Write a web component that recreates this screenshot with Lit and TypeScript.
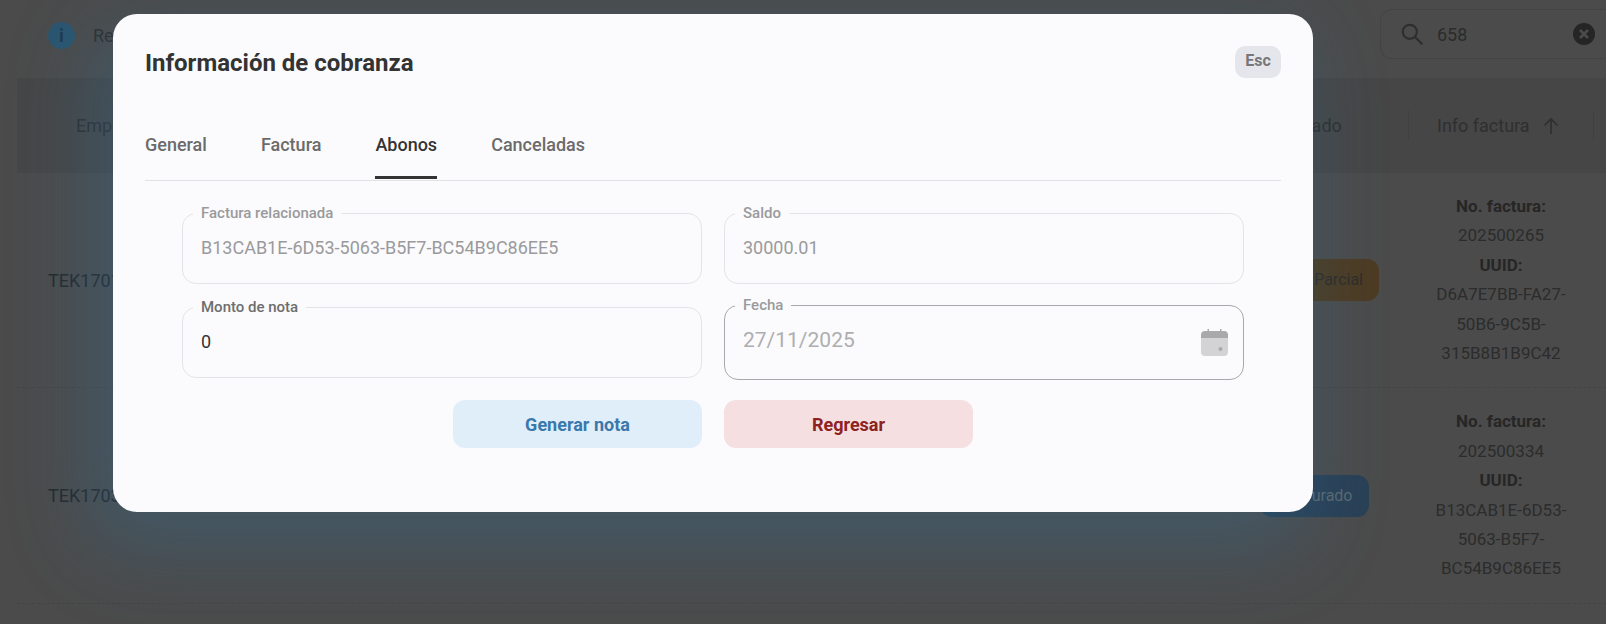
import {html, css, LitElement} from 'lit';
import {customElement} from 'lit/decorators.js';

const rows = [
    {id: 'TEK17012', status: 'Parcial', cls: 'parcial', folio: '202500265', uuid: ['D6A7E7BB-FA27-', '50B6-9C5B-', '315B8B1B9C42']},
    {id: 'TEK17034', status: 'Curado', cls: 'curado', folio: '202500334', uuid: ['B13CAB1E-6D53-', '5063-B5F7-', 'BC54B9C86EE5']},
];

const calendarIcon = html`
    <svg class="calendar" viewBox="0 0 27 27" width="27" height="27">
        <path fill="#d3d3d5" d="M0 8h27v15a4 4 0 0 1-4 4H4a4 4 0 0 1-4-4z" />
        <path fill="#a9a9ab" d="M0 9V6a4 4 0 0 1 4-4h2.500V0h1.500v2h11V0h1.500v2H23a4 4 0 0 1 4 4v3z" />
        <circle fill="#a9a9ab" cx="19.500" cy="20" r="2" />
    </svg>
`;

@customElement('app-root')
export class AppRoot extends LitElement {
    render() {
        return html`
            <div class="topbar">
                <div class="notice">
                    <span class="info-dot">i</span>
                    <span>Registros</span>
                </div>
                <div class="search">
                    <svg viewBox="0 0 24 24" width="26" height="26" fill="none" stroke="#2e2e2e" stroke-width="2">
                        <circle cx="10" cy="10" r="6.500" />
                        <path d="M15 15l6.500 6.500" />
                    </svg>
                    <span class="search-value">658</span>
                    <svg class="clear" viewBox="0 0 22 22" width="22" height="22">
                        <circle cx="11" cy="11" r="11" fill="#252525" />
                        <path d="M7 7l8 8M15 7l-8 8" stroke="#4b4b4b" stroke-width="2.600" />
                    </svg>
                </div>
            </div>

            <div class="table">
                <div class="thead">
                    <div class="th first">Empresa</div>
                    <div class="th center">Estado</div>
                    <div class="th info-head">
                        Info factura
                        <svg viewBox="0 0 18 18" width="18" height="18" fill="none" stroke="#2f2f2f" stroke-width="1.600">
                            <path d="M9 17V2M2.500 8.500L9 2l6.500 6.500" />
                        </svg>
                    </div>
                </div>
                ${rows.map(r => html`
                    <div class="row">
                        <div class="cell-id">${r.id}</div>
                        <div class="cell-status"><span class="badge ${r.cls}">${r.status}</span></div>
                        <div class="cell-info">
                            <b>No. factura:</b>
                            <div>${r.folio}</div>
                            <b>UUID:</b>
                            ${r.uuid.map(u => html`<div>${u}</div>`)}
                        </div>
                    </div>
                `)}
            </div>

            <div class="modal">
                <div class="modal-head">
                    <h2>Información de cobranza</h2>
                    <span class="esc">Esc</span>
                </div>
                <div class="tabs">
                    <span class="tab">General</span>
                    <span class="tab">Factura</span>
                    <span class="tab active">Abonos</span>
                    <span class="tab">Canceladas</span>
                </div>
                <div class="form">
                    <div class="form-row">
                        <fieldset class="disabled">
                            <legend>Factura relacionada</legend>
                            <div class="value">B13CAB1E-6D53-5063-B5F7-BC54B9C86EE5</div>
                        </fieldset>
                        <fieldset class="disabled">
                            <legend>Saldo</legend>
                            <div class="value">30000.01</div>
                        </fieldset>
                    </div>
                    <div class="form-row">
                        <fieldset>
                            <legend>Monto de nota</legend>
                            <div class="value">0</div>
                        </fieldset>
                        <fieldset class="date">
                            <legend>Fecha</legend>
                            <div class="value date-value">
                                <span>27/11/2025</span>
                                ${calendarIcon}
                            </div>
                        </fieldset>
                    </div>
                    <div class="actions">
                        <button class="generate">Generar nota</button>
                        <button class="back">Regresar</button>
                    </div>
                </div>
            </div>
        `;
    }

    static styles = [
        css`
            :host {
                display: block;
                position: relative;
                height: 624px;
                overflow: hidden;
                background: #4b4b4b;
                font-family: Roboto, sans-serif;
                color: #2b2b2b;
            }

            .topbar {
                height: 78px;
                box-sizing: border-box;
                padding: 9px 0 0 48px;
                display: flex;
                justify-content: space-between;
                align-items: flex-start;
            }

            .notice {
                display: flex;
                align-items: center;
                gap: 18px;
                height: 52px;
                font-size: 18px;
                color: #2f2f2f;
            }

            .info-dot {
                width: 27px;
                height: 27px;
                border-radius: 50%;
                background: #2b5570;
                color: #1d3b4f;
                font-weight: 700;
                font-size: 18px;
                display: flex;
                align-items: center;
                justify-content: center;
            }

            .search {
                width: 226px;
                height: 50px;
                box-sizing: border-box;
                border: 1px solid #444;
                border-right: 0;
                border-radius: 12px 0 0 12px;
                display: flex;
                align-items: center;
                padding: 0 11px 0 18px;
                gap: 12px;
            }

            .search-value {
                flex: 1;
                font-size: 18px;
                color: #2b2b2b;
            }

            .table {
                margin-left: 17px;
            }

            .thead {
                height: 95px;
                background: #464646;
                display: grid;
                grid-template-columns: 1fr 188px 186px;
                padding-right: 12px;
                align-items: center;
            }

            .th {
                font-size: 18px;
                color: #2f2f2f;
            }

            .th.first {
                padding-left: 59px;
            }

            .th.center {
                text-align: center;
            }

            .th.info-head {
                height: 31px;
                display: flex;
                align-items: center;
                gap: 12px;
                padding-left: 28px;
                border-left: 1px solid #414141;
                border-right: 1px solid #414141;
            }

            .row {
                display: grid;
                grid-template-columns: 1fr 188px 186px;
                padding-right: 12px;
                align-items: center;
                border-bottom: 1px dashed #454545;
            }

            .cell-id {
                padding-left: 31px;
                font-size: 18px;
                color: #24292d;
            }

            .cell-status {
                text-align: center;
            }

            .badge {
                display: inline-block;
                padding: 0 16px;
                height: 42px;
                line-height: 42px;
                border-radius: 12px;
                font-size: 16px;
            }

            .badge.parcial {
                width: 98px;
                background: #4d3b22;
                color: #2f2c28;
                text-align: right;
            }

            .badge.curado {
                width: 77px;
                background: #2a4055;
                color: #5a6872;
                text-align: right;
            }

            .cell-info {
                padding: 19px 4px;
                text-align: center;
                font-size: 17px;
                line-height: 29.400px;
                color: #2c2c2c;
            }

            .cell-info b {
                display: block;
                color: #262626;
            }

            .modal {
                position: absolute;
                left: 113px;
                top: 14px;
                width: 1200px;
                height: 498px;
                box-sizing: border-box;
                padding: 32px;
                background: #fbfbfd;
                border-radius: 24px;
                box-shadow: -16px 28px 80px 10px rgba(50, 115, 160, 0.32);
            }

            .modal-head {
                display: flex;
                justify-content: space-between;
                align-items: flex-start;
                height: 32px;
            }

            h2 {
                margin: 0;
                font-size: 24px;
                font-weight: 700;
                line-height: 34px;
                color: #333;
            }

            .esc {
                width: 46px;
                height: 32px;
                line-height: 30px;
                text-align: center;
                background: #e4e6ec;
                border-radius: 10px;
                font-size: 16px;
                font-weight: 700;
                color: #777;
            }

            .tabs {
                margin-top: 33px;
                height: 69px;
                display: flex;
                gap: 54px;
                border-bottom: 1px solid #e2e2e6;
            }

            .tab {
                box-sizing: border-box;
                height: 68px;
                line-height: 68px;
                font-size: 18px;
                font-weight: 500;
                color: #6b6b6b;
            }

            .tab.active {
                color: #333;
                border-bottom: 3px solid #333;
            }

            .form {
                padding: 24px 37px 0;
                display: flex;
                flex-direction: column;
            }

            .form-row {
                display: grid;
                grid-template-columns: 1fr 1fr;
                gap: 22px;
                align-items: center;
                margin-bottom: 13px;
            }

            .form-row:nth-child(2) {
                margin-bottom: 20px;
            }

            fieldset {
                min-width: 0;
                margin: 0;
                padding: 0 10px 8px;
                border: 1px solid #e4e4e8;
                border-radius: 14px;
            }

            legend {
                padding: 0 8px;
                font-size: 15px;
                font-weight: 500;
                line-height: 16px;
                color: #6e6e6e;
            }

            .value {
                height: 54px;
                line-height: 54px;
                padding: 0 8px;
                font-size: 18px;
                color: #333;
            }

            .disabled legend,
            .date legend {
                color: #9a9a9c;
            }

            .disabled .value {
                color: #9a9a9c;
            }

            fieldset.date {
                border-color: #a9a9ad;
                padding: 0 10px 12px;
            }

            .date-value {
                display: flex;
                justify-content: space-between;
                align-items: center;
                font-size: 21px;
                color: #aeaeb0;
                padding-right: 5px;
            }

            .calendar {
                margin-top: 5px;
            }

            .actions {
                display: flex;
                justify-content: center;
                gap: 22px;
            }

            button {
                width: 249px;
                height: 48px;
                border: 0;
                border-radius: 12px;
                font-family: Roboto, sans-serif;
                font-size: 18px;
                font-weight: 700;
            }

            .generate {
                background: #e0eefa;
                color: #3a78ab;
            }

            .back {
                background: #f5dfe0;
                color: #8e2222;
            }
        `
    ];
}
